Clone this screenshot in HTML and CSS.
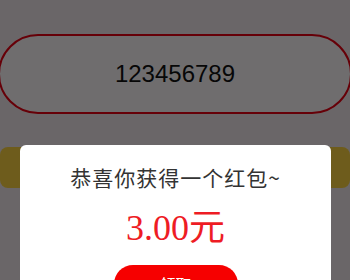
FILE: index.html
```html
<!DOCTYPE html>
<html lang="zh-CN">
<head>
<meta charset="utf-8">
<title>红包</title>
<link rel="stylesheet" href="styles.css">
</head>
<body>
<main class="page">
  <div class="code-pill">123456789</div>
  <div class="yellow-bar"></div>
</main>
<div class="overlay">
  <div class="modal">
    <div class="modal-title">恭喜你获得一个红包~</div>
    <div class="modal-amount">3.00元</div>
    <div class="modal-btn">领取</div>
  </div>
</div>
</body>
</html>
```
FILE: styles.css
```css
html, body {
  margin: 0;
  padding: 0;
}
body {
  width: 350px;
  height: 280px;
  overflow: hidden;
  background: #ece3e7;
  font-family: "Liberation Sans", "Noto Sans CJK SC", sans-serif;
}
.page {
  padding-top: 34px;
  display: flex;
  flex-direction: column;
  gap: 33px;
}
.code-pill {
  margin: 0 -2px;
  height: 76px;
  border: 2px solid #e20012;
  border-radius: 40px;
  background: #f5f1f4;
  display: flex;
  align-items: center;
  justify-content: center;
  font-size: 24px;
  color: #111;
}
.yellow-bar {
  height: 41px;
  background: #f4cc3e;
  border-radius: 8px;
}
.overlay {
  position: fixed;
  inset: 0;
  background: rgba(0, 0, 0, 0.55);
}
.modal {
  position: absolute;
  left: 20px;
  top: 145px;
  width: 311px;
  height: 160px;
  background: #fff;
  border-radius: 6px;
  display: flex;
  flex-direction: column;
  align-items: center;
  padding-top: 18px;
  box-sizing: border-box;
}
.modal-title {
  font-family: "Noto Sans CJK SC", sans-serif;
  font-size: 21px;
  line-height: 28px;
  color: #333;
  letter-spacing: 1px;
}
.modal-amount {
  margin-top: 15px;
  font-family: "Liberation Serif", "Noto Sans CJK SC", serif;
  font-size: 36px;
  line-height: 44px;
  color: #ee1c24;
}
.modal-btn {
  margin-top: 15px;
  width: 124px;
  height: 38px;
  line-height: 38px;
  border-radius: 19px;
  background: #f60000;
  color: #fff;
  text-align: center;
  font-family: "Noto Sans CJK SC", sans-serif;
  font-size: 16px;
}
```
